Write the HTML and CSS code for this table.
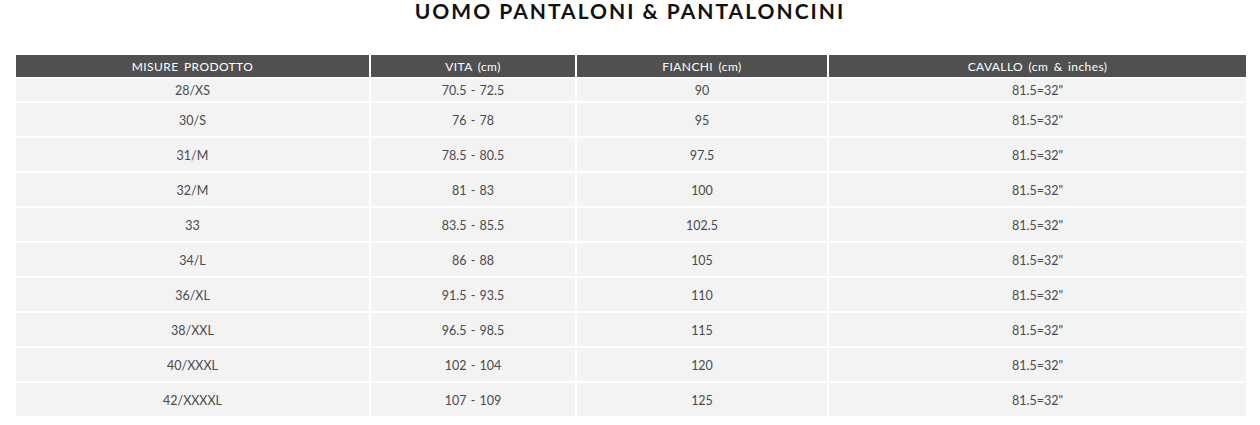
FILE: index.html
```html
<!DOCTYPE html>
<html lang="it">
<head>
<meta charset="utf-8">
<title>Uomo Pantaloni &amp; Pantaloncini</title>
<link rel="stylesheet" href="styles.css">
</head>
<body>
<h1 class="title">UOMO PANTALONI &amp; PANTALONCINI</h1>
<div class="size-table">
  <div class="cell head">MISURE PRODOTTO</div>
  <div class="cell head">VITA (cm)</div>
  <div class="cell head">FIANCHI (cm)</div>
  <div class="cell head">CAVALLO (cm &amp; inches)</div>

  <div class="cell">28/XS</div><div class="cell">70.5 - 72.5</div><div class="cell">90</div><div class="cell">81.5=32"</div>
  <div class="cell">30/S</div><div class="cell">76 - 78</div><div class="cell">95</div><div class="cell">81.5=32"</div>
  <div class="cell">31/M</div><div class="cell">78.5 - 80.5</div><div class="cell">97.5</div><div class="cell">81.5=32"</div>
  <div class="cell">32/M</div><div class="cell">81 - 83</div><div class="cell">100</div><div class="cell">81.5=32"</div>
  <div class="cell">33</div><div class="cell">83.5 - 85.5</div><div class="cell">102.5</div><div class="cell">81.5=32"</div>
  <div class="cell">34/L</div><div class="cell">86 - 88</div><div class="cell">105</div><div class="cell">81.5=32"</div>
  <div class="cell">36/XL</div><div class="cell">91.5 - 93.5</div><div class="cell">110</div><div class="cell">81.5=32"</div>
  <div class="cell">38/XXL</div><div class="cell">96.5 - 98.5</div><div class="cell">115</div><div class="cell">81.5=32"</div>
  <div class="cell">40/XXXL</div><div class="cell">102 - 104</div><div class="cell">120</div><div class="cell">81.5=32"</div>
  <div class="cell">42/XXXXL</div><div class="cell">107 - 109</div><div class="cell">125</div><div class="cell">81.5=32"</div>
</div>
</body>
</html>
```

FILE: styles.css
```css
html, body {
  margin: 0;
  padding: 0;
  background: #ffffff;
}

body {
  font-family: "Lato", "Open Sans", sans-serif;
  color: #444444;
}

.title {
  margin: 0;
  padding-top: 0;
  height: 54px;
  box-sizing: border-box;
  text-align: center;
  font-family: "Lato", sans-serif;
  font-weight: 700;
  font-size: 21px;
  line-height: 22px;
  color: #111111;
  letter-spacing: 2px;
}

.size-table {
  display: grid;
  grid-template-columns: 353px 204px 250px 417px;
  grid-template-rows: 22px 22px;
  grid-auto-rows: 33px;
  gap: 2px;
  margin-left: 16px;
  margin-top: 1px;
}

.cell {
  display: flex;
  align-items: center;
  justify-content: center;
  background: #f3f3f3;
  font-size: 12.5px;
  color: #4a4a4a;
  padding-top: 1px;
  box-sizing: border-box;
  word-spacing: 1px;
}

.head {
  background: #505050;
  color: #ffffff;
  font-size: 12px;
  letter-spacing: 0.4px;
  word-spacing: 2px;
}
```
